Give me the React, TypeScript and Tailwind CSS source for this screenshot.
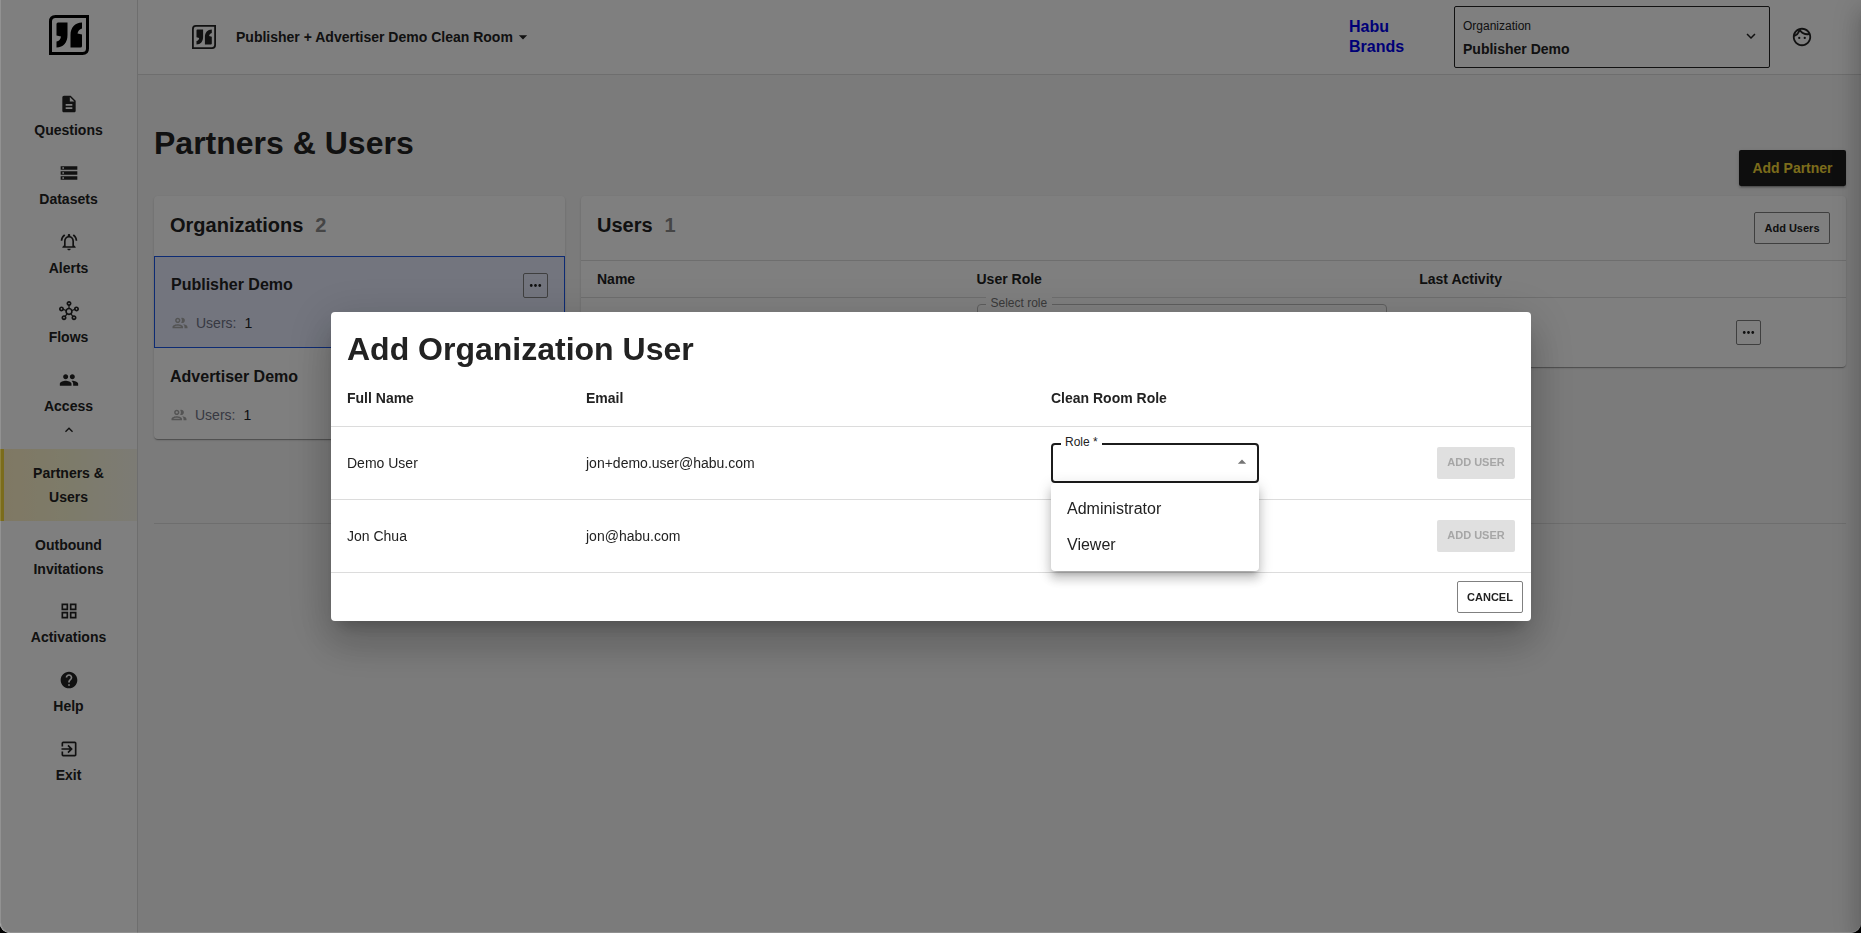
import { useState, type ReactNode } from "react";
import type { IconType } from "react-icons";
import {
  MdArrowDropDown,
  MdArrowDropUp,
  MdDescription,
  MdExitToApp,
  MdExpandLess,
  MdExpandMore,
  MdHelp,
  MdMoreHoriz,
  MdOutlineFace,
  MdOutlineGridView,
  MdOutlineHub,
  MdOutlineNotificationsActive,
  MdPeople,
  MdStorage,
} from "react-icons/md";

interface Organization {
  name: string;
  users: number;
}

interface Candidate {
  name: string;
  email: string;
}

const organizations: Organization[] = [
  { name: "Publisher Demo", users: 1 },
  { name: "Advertiser Demo", users: 1 },
];

const candidates: Candidate[] = [
  { name: "Demo User", email: "jon+demo.user@habu.com" },
  { name: "Jon Chua", email: "jon@habu.com" },
];

const roles = ["Administrator", "Viewer"];

function Logo({ className }: { className: string }) {
  return (
    <svg viewBox="0 0 40 40" className={className} aria-hidden="true">
      <path
        d="M6.500 1.500H38.500V33.500Q38.500 38.500 33.500 38.500H1.500V6.500Q1.500 1.500 6.500 1.500Z"
        fill="none"
        stroke="currentColor"
        strokeWidth="3"
      />
      <path
        fill="currentColor"
        d="M9 7.500H18.500V20C18.500 27.500 14.500 32.500 7.500 32.500V26.500C10 26 11.500 24.500 12 21.500L7.500 20.500V9Q7.500 7.500 9 7.500Z"
      />
      <path
        fill="currentColor"
        d="M31.500 32.500H21.500V20C21.500 12.500 26 7.500 33 7.500V13.500C30.500 14 29 16 28.500 18.500L33 19.500V31Q33 32.500 31.500 32.500Z"
      />
    </svg>
  );
}

function GroupIcon({ className }: { className: string }) {
  return (
    <svg viewBox="0 0 24 24" width="18" height="18" fill="currentColor" className={className} aria-hidden="true">
      <path d="M9 13.75c-2.34 0-7 1.17-7 3.5V19h14v-1.75c0-2.33-4.66-3.5-7-3.5zM4.34 17c.84-.58 2.87-1.25 4.66-1.25s3.82.67 4.66 1.25H4.34zM9 12c1.93 0 3.5-1.57 3.5-3.5S10.93 5 9 5 5.5 6.57 5.5 8.5 7.07 12 9 12zm0-5c.83 0 1.5.67 1.5 1.5S9.83 10 9 10s-1.500-.67-1.500-1.500S8.170 7 9 7zm7.040 6.810c1.160.840 1.960 1.960 1.960 3.440V19h4v-1.750c0-2.020-3.500-3.170-5.960-3.440zM15 12c1.930 0 3.500-1.570 3.500-3.500S16.930 5 15 5c-.540 0-1.040.130-1.500.350.630.890 1 1.980 1 3.150s-.370 2.260-1 3.150c.460.220.960.350 1.500.350z" />
    </svg>
  );
}

function NavItem({ icon: Icon, label, children }: { icon: IconType; label: string; children?: ReactNode }) {
  return (
    <a href="#" className="flex flex-col items-center pt-[10px] pb-[11px] text-sm font-bold">
      <Icon size={20} />
      <span className="mt-1 leading-6">{label}</span>
      {children}
    </a>
  );
}

function MoreButton({ label }: { label: string }) {
  return (
    <button
      type="button"
      aria-label={label}
      className="flex h-[25px] w-[25px] items-center justify-center rounded-xs border border-[#7f7f7f]"
    >
      <MdMoreHoriz size={17} />
    </button>
  );
}

function Sidebar() {
  return (
    <nav className="w-[138px] shrink-0 border-r border-[#dcdcdc] bg-white">
      <div className="flex h-[84px] justify-center pt-[15px]">
        <Logo className="h-10 w-10 text-black" />
      </div>
      <NavItem icon={MdDescription} label="Questions" />
      <NavItem icon={MdStorage} label="Datasets" />
      <NavItem icon={MdOutlineNotificationsActive} label="Alerts" />
      <NavItem icon={MdOutlineHub} label="Flows" />
      <NavItem icon={MdPeople} label="Access">
        <MdExpandLess size={16} className="mt-1" />
      </NavItem>
      <a
        href="#"
        className="block border-l-4 border-[#f6d936] bg-linear-to-r from-[#fff1c8] via-[#fbf7d4] to-[#f9f7ea] py-3 pr-1 text-center text-sm leading-6 font-bold"
      >
        Partners &amp;
        <br />
        Users
      </a>
      <a href="#" className="block pt-3 pb-[10px] text-center text-sm leading-6 font-bold">
        Outbound
        <br />
        Invitations
      </a>
      <NavItem icon={MdOutlineGridView} label="Activations" />
      <NavItem icon={MdHelp} label="Help" />
      <NavItem icon={MdExitToApp} label="Exit" />
    </nav>
  );
}

function Header() {
  return (
    <header className="flex h-[75px] items-center border-b border-[#dcdcdc] bg-white pr-12 pl-[54px]">
      <Logo className="h-6 w-6" />
      <button type="button" className="ml-5 flex items-center text-sm font-bold">
        Publisher + Advertiser Demo Clean Room
        <MdArrowDropDown size={20} />
      </button>
      <a href="#" className="ml-auto w-[105px] text-base leading-5 font-bold text-[#0000ee]">
        Habu
        <br />
        Brands
      </a>
      <div className="relative flex h-[62px] w-[316px] flex-col rounded-xs border border-[#222] pt-2 text-[#222]">
        <label htmlFor="organization" className="pl-2 text-xs leading-[22px]">
          Organization
        </label>
        <select
          id="organization"
          defaultValue="Publisher Demo"
          className="w-full appearance-none bg-transparent pl-2 text-sm leading-6 font-bold outline-none"
        >
          {organizations.map((o) => (
            <option key={o.name}>{o.name}</option>
          ))}
        </select>
        <MdExpandMore size={18} className="pointer-events-none absolute top-5 right-[9px]" />
      </div>
      <button type="button" aria-label="Account" className="ml-[21px]">
        <MdOutlineFace size={22} />
      </button>
    </header>
  );
}

function OrganizationsCard() {
  const [selected, setSelected] = useState("Publisher Demo");

  return (
    <section className="self-start rounded bg-white shadow-[0_2px_1px_-1px_rgba(0,0,0,0.2),0_1px_1px_0_rgba(0,0,0,0.14),0_1px_3px_0_rgba(0,0,0,0.12)]">
      <h2 className="flex h-[60px] items-center gap-3 px-4 pb-0.5 text-xl font-bold">
        Organizations <span className="text-[#8a8a8a]">2</span>
      </h2>
      {organizations.map((o) => (
        <div
          key={o.name}
          onClick={() => setSelected(o.name)}
          className={
            o.name === selected
              ? "border border-[#1a56e8] bg-[#e6ebfd] px-4 pt-4 pb-[14px]"
              : "px-4 pt-[17px] pb-[14px]"
          }
        >
          <div className="flex h-6 items-center justify-between">
            <h3 className="text-base font-bold">{o.name}</h3>
            {o.name === selected && <MoreButton label={`${o.name} actions`} />}
          </div>
          <p className="mt-4 flex items-center text-sm leading-5">
            <GroupIcon className="text-[#a8a8a8]" />
            <span className="ml-[7px] text-[#6f7285]">Users:</span>
            <span className="ml-2">{o.users}</span>
          </p>
        </div>
      ))}
    </section>
  );
}

function UsersCard() {
  return (
    <section className="col-span-3 self-start rounded bg-white shadow-[0_2px_1px_-1px_rgba(0,0,0,0.2),0_1px_1px_0_rgba(0,0,0,0.14),0_1px_3px_0_rgba(0,0,0,0.12)]">
      <div className="flex h-16 items-center justify-between px-4">
        <h2 className="flex gap-3 pb-1.5 text-xl font-bold">
          Users <span className="text-[#8a8a8a]">1</span>
        </h2>
        <button type="button" className="h-8 w-[76px] rounded-xs border border-[#7f7f7f] text-[11px] font-bold">
          Add Users
        </button>
      </div>
      <table className="w-full table-fixed border-t border-[#dcdcdc] text-left text-sm">
        <thead>
          <tr className="h-[37px] border-b border-[#dcdcdc]">
            <th className="w-[30%] px-4 font-bold">Name</th>
            <th className="w-[35%] px-4 font-bold">User Role</th>
            <th className="w-[25%] px-4 font-bold">Last Activity</th>
            <th className="w-[10%] px-4" aria-label="Actions" />
          </tr>
        </thead>
        <tbody>
          <tr className="h-[69px]">
            <td className="px-4" />
            <td className="px-4">
              <div className="relative">
                <select
                  id="user-role"
                  className="block h-14 w-full appearance-none rounded border border-[#bdbdbd] bg-transparent px-3 outline-none"
                >
                  {roles.map((r) => (
                    <option key={r}>{r}</option>
                  ))}
                </select>
                <label
                  htmlFor="user-role"
                  className="absolute -top-[7px] left-[9px] bg-white px-[5px] text-xs leading-3 text-[#757575]"
                >
                  Select role
                </label>
              </div>
            </td>
            <td className="px-4" />
            <td className="px-4">
              <MoreButton label="User actions" />
            </td>
          </tr>
        </tbody>
      </table>
    </section>
  );
}

function RoleSelect({ id, open }: { id: string; open: boolean }) {
  const [role, setRole] = useState("");

  return (
    <div className="relative w-[208px]">
      <select
        id={id}
        aria-label="Role"
        value={role}
        onChange={(e) => setRole(e.target.value)}
        className={
          open
            ? "block h-10 w-full appearance-none rounded border-2 border-[#1c1c1c] px-3 outline-none"
            : "block h-10 w-full appearance-none rounded border border-[#bdbdbd] px-3 outline-none"
        }
      >
        <option value="" />
        {roles.map((r) => (
          <option key={r}>{r}</option>
        ))}
      </select>
      {open ? (
        <MdArrowDropUp size={20} className="pointer-events-none absolute top-[9px] right-[7px] text-[#757575]" />
      ) : (
        <MdArrowDropDown size={20} className="pointer-events-none absolute top-[9px] right-[7px] text-[#757575]" />
      )}
      {open && (
        <>
          <label htmlFor={id} className="absolute -top-2 left-[10px] bg-white px-1 text-xs leading-[14px] text-[#222]">
            Role&nbsp;*
          </label>
          <ul
            role="listbox"
            className="absolute top-full left-0 z-10 w-full rounded bg-white py-2 text-base shadow-[0_5px_5px_-3px_rgba(0,0,0,0.2),0_8px_10px_1px_rgba(0,0,0,0.14),0_3px_14px_2px_rgba(0,0,0,0.12)]"
          >
            {roles.map((r) => (
              <li
                key={r}
                role="option"
                aria-selected={r === role}
                onClick={() => setRole(r)}
                className="cursor-pointer px-4 py-[6px] leading-6"
              >
                {r}
              </li>
            ))}
          </ul>
        </>
      )}
    </div>
  );
}

function AddUserDialog() {
  return (
    <div className="fixed inset-0 flex items-center justify-center overflow-hidden rounded-b-[10px] border-l border-white/15 bg-black/50 shadow-[inset_0_-1px_0_rgba(255,255,255,0.15)]">
      <div
        role="dialog"
        aria-labelledby="dialog-title"
        className="w-full max-w-[1200px] rounded bg-white shadow-[0_11px_15px_-7px_rgba(0,0,0,0.2),0_24px_38px_3px_rgba(0,0,0,0.14),0_9px_46px_8px_rgba(0,0,0,0.12)]"
      >
        <h2 id="dialog-title" className="px-4 pt-4 text-[32px] leading-[42px] font-bold">
          Add Organization User
        </h2>
        <table className="w-full table-fixed text-left text-sm">
          <thead>
            <tr className="h-[57px] border-b border-[#dcdcdc]">
              <th className="w-[239px] px-4 font-bold">Full Name</th>
              <th className="w-[465px] px-4 font-bold">Email</th>
              <th className="w-60 px-4 font-bold">Clean Room Role</th>
              <th className="px-4" aria-label="Actions" />
            </tr>
          </thead>
          <tbody>
            {candidates.map((c, i) => (
              <tr key={c.email} className="h-[73px] border-b border-[#dcdcdc]">
                <td className="px-4">{c.name}</td>
                <td className="px-4">{c.email}</td>
                <td className="px-4">
                  <RoleSelect id={`role-${i}`} open={i === 0} />
                </td>
                <td className="px-4 text-right">
                  <button
                    type="button"
                    disabled
                    className="h-8 w-[78px] rounded-xs bg-[#e0e0e0] text-[11px] font-bold text-[#a6a6a6] uppercase"
                  >
                    Add User
                  </button>
                </td>
              </tr>
            ))}
          </tbody>
        </table>
        <div className="flex justify-end p-2">
          <button type="button" className="h-8 w-[66px] rounded-xs border border-[#808080] text-[11px] font-bold uppercase">
            Cancel
          </button>
        </div>
      </div>
      {/* closed drawer, only its shadow reaches the page */}
      <aside className="absolute inset-y-0 left-full w-80 shadow-[0_8px_10px_-5px_rgba(0,0,0,0.2),0_16px_24px_2px_rgba(0,0,0,0.14),0_6px_30px_5px_rgba(0,0,0,0.12)]" />
    </div>
  );
}

export default function App() {
  return (
    <div className="bg-black font-['Liberation_Sans',Arial,sans-serif] text-[#222]">
      <div className="flex min-h-screen overflow-hidden rounded-b-[10px] bg-[#f7f7f7]">
        <Sidebar />
        <div className="min-w-0 flex-1">
          <Header />
          <main className="pt-12 pr-[15px] pl-4">
            <div className="flex items-start justify-between">
              <h1 className="text-[32px] leading-10 font-bold">Partners &amp; Users</h1>
              <button
                type="button"
                className="mt-[27px] h-9 w-[107px] rounded-xs bg-[#1c1c1c] text-sm font-bold text-[#f6d936] shadow-[0_3px_1px_-2px_rgba(0,0,0,0.2),0_2px_2px_0_rgba(0,0,0,0.14),0_1px_5px_0_rgba(0,0,0,0.12)]"
              >
                Add Partner
              </button>
            </div>
            <div className="mt-[10px] grid min-h-[327px] grid-cols-4 gap-4">
              <OrganizationsCard />
              <UsersCard />
            </div>
            <hr className="border-[#dcdcdc]" />
          </main>
        </div>
      </div>
      <AddUserDialog />
    </div>
  );
}
